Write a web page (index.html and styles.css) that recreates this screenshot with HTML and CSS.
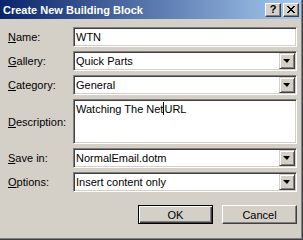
FILE: index.html
```html
<!DOCTYPE html>
<html lang="en">

<head>
    <meta charset="UTF-8">
    <title>Create New Building Block</title>
    <link rel="stylesheet" href="styles.css">
</head>

<body>
    <div class="window">
        <div class="titlebar">
            <span class="title">Create New Building Block</span>
            <div class="caption-btns">
                <span class="cap-btn help">?</span>
                <span class="cap-btn close">
                    <svg width="8" height="7" viewBox="0 0 8 7">
                        <path d="M0 0h2v1h1v1h2v-1h1v-1h2v1h-1v1h-1v1h-1v1h1v1h1v1h1v1h-2v-1h-1v-1h-2v1h-1v1h-2v-1h1v-1h1v-1h1v-1h-1v-1h-1v-1h-1z" fill="#000"/>
                    </svg>
                </span>
            </div>
        </div>

        <!--Campos del bloque-->
        <form class="fields">
            <label><u>N</u>ame:</label>
            <div class="box">WTN</div>

            <label><u>G</u>allery:</label>
            <div class="box combo">Quick Parts<i class="drop"></i></div>

            <label><u>C</u>ategory:</label>
            <div class="box combo">General<i class="drop"></i></div>

            <label><u>D</u>escription:</label>
            <div class="box memo">Watching The Net<span class="caret"></span>URL</div>

            <label><u>S</u>ave in:</label>
            <div class="box combo">NormalEmail.dotm<i class="drop"></i></div>

            <label><u>O</u>ptions:</label>
            <div class="box combo">Insert content only<i class="drop"></i></div>
        </form>

        <div class="actions">
            <button class="btn default">OK</button>
            <button class="btn">Cancel</button>
        </div>
    </div>
</body>

</html>
```

FILE: styles.css
```css
* {
    box-sizing: border-box;
}

body {
    margin: 0;
    font-family: "Liberation Sans", Arial, sans-serif;
    font-size: 11px;
    color: #000;
}

.window {
    width: 303px;
    height: 240px;
    background-color: #d4d0c8;
    border-right: 1px solid #404040;
    border-bottom: 1px solid #404040;
    box-shadow: inset -1px -1px #808080;
    overflow: hidden;
}

.titlebar {
    height: 19px;
    margin-right: 1px;
    display: flex;
    align-items: center;
    justify-content: space-between;
    padding-left: 3px;
    padding-right: 2px;
    background: linear-gradient(to right, #0a246a, #a6caf0);
}

.title {
    color: #fff;
    font-weight: bold;
    font-size: 11px;
}

.caption-btns {
    display: flex;
    gap: 2px;
}

.cap-btn {
    width: 16px;
    height: 14px;
    display: flex;
    justify-content: center;
    align-items: center;
    background-color: #d4d0c8;
    border-top: 1px solid #fff;
    border-left: 1px solid #fff;
    border-right: 1px solid #404040;
    border-bottom: 1px solid #404040;
    box-shadow: inset -1px -1px #808080;
    font-weight: bold;
    font-size: 11px;
    line-height: 1;

    &.help {
        padding-bottom: 1px;
    }
}

/*Formulario*/
.fields {
    margin: 0;
    display: grid;
    grid-template-columns: 65px 224px;
    grid-template-rows: 20px 20px 20px 45px 20px 20px;
    row-gap: 4px;
    padding: 8px 0 0 8px;

    label {
        display: flex;
        align-items: center;
    }
}

.box {
    position: relative;
    display: flex;
    align-items: center;
    padding-left: 2px;
    background-color: #fff;
    border-top: 1px solid #808080;
    border-left: 1px solid #808080;
    border-right: 1px solid #fff;
    border-bottom: 1px solid #fff;
    box-shadow: inset 1px 1px #404040, inset -1px -1px #d4d0c8;
    white-space: nowrap;
}

.memo {
    align-items: flex-start;
    padding-top: 3px;
}

.caret {
    display: inline-block;
    width: 1px;
    height: 13px;
    background-color: #000;
    margin-top: -1px;
}

.drop {
    position: absolute;
    top: 1px;
    right: 1px;
    width: 16px;
    height: 16px;
    background-color: #d4d0c8;
    border-top: 1px solid #d4d0c8;
    border-left: 1px solid #d4d0c8;
    border-right: 1px solid #404040;
    border-bottom: 1px solid #404040;
    box-shadow: inset 1px 1px #fff, inset -1px -1px #808080;

    &::after {
        content: "";
        position: absolute;
        left: 3px;
        top: 5px;
        border-left: 4px solid transparent;
        border-right: 3px solid transparent;
        border-top: 4px solid #000;
    }
}

.actions {
    display: flex;
    justify-content: flex-end;
    gap: 9px;
    padding: 13px 5px 0 0;
}

.btn {
    width: 75px;
    height: 19px;
    padding: 0;
    font-family: inherit;
    font-size: 11px;
    background-color: #d4d0c8;
    border-top: 1px solid #fff;
    border-left: 1px solid #fff;
    border-right: 1px solid #404040;
    border-bottom: 1px solid #404040;
    box-shadow: inset -1px -1px #808080;

    &.default {
        border: 1px solid #000;
        box-shadow: inset 1px 1px #fff, inset -1px -1px #404040, inset -2px -2px #808080;
    }
}
```
